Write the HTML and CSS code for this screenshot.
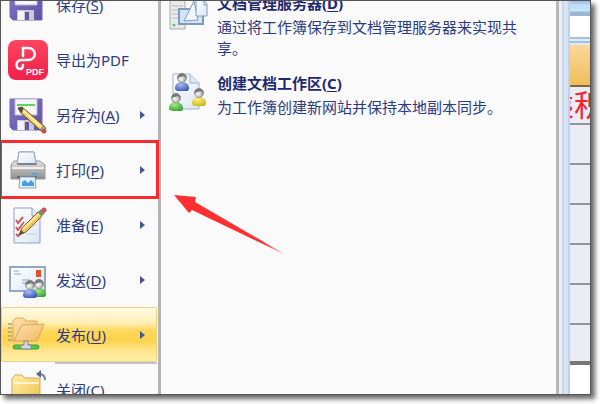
FILE: index.html
```html
<!DOCTYPE html>
<html lang="zh-CN">
<head>
<meta charset="utf-8">
<title>Office 菜单</title>
<link rel="stylesheet" href="styles.css">
</head>
<body>
<svg class="defs" aria-hidden="true">
  <defs>
    <linearGradient id="purple" x1="0" y1="0" x2="1" y2="1"><stop offset="0" stop-color="#8276c4"/><stop offset="1" stop-color="#5f50a4"/></linearGradient>
    <linearGradient id="paper" x1="0" y1="0" x2="1" y2="1"><stop offset="0" stop-color="#ffffff"/><stop offset="1" stop-color="#dbe6f2"/></linearGradient>
    <linearGradient id="folder" x1="0" y1="0" x2="1" y2="1"><stop offset="0" stop-color="#fff0ab"/><stop offset="1" stop-color="#ecbd49"/></linearGradient>
    <linearGradient id="orange" x1="0" y1="0" x2="1" y2="1"><stop offset="0" stop-color="#ffe3ac"/><stop offset="1" stop-color="#f3b562"/></linearGradient>
    <linearGradient id="metal" x1="0" y1="0" x2="0" y2="1"><stop offset="0" stop-color="#e4e4e4"/><stop offset=".5" stop-color="#b4b4b4"/><stop offset="1" stop-color="#8b8b8b"/></linearGradient>
    <linearGradient id="red" x1="0" y1="0" x2="0" y2="1"><stop offset="0" stop-color="#fb4660"/><stop offset="1" stop-color="#f1204a"/></linearGradient>
    <linearGradient id="arrow" x1="0" y1="0" x2="1" y2="0"><stop offset=".8" stop-color="#ff3030"/><stop offset="1" stop-color="#ff3030" stop-opacity=".4"/></linearGradient>
    <radialGradient id="skin" cx=".4" cy=".6" r=".6"><stop offset="0" stop-color="#fafafa"/><stop offset=".6" stop-color="#c4c4c4"/><stop offset="1" stop-color="#777"/></radialGradient>
    <radialGradient id="blue" cx=".4" cy=".3" r=".8"><stop offset="0" stop-color="#a9bdf5"/><stop offset="1" stop-color="#2f4dba"/></radialGradient>
    <radialGradient id="green" cx=".4" cy=".3" r=".8"><stop offset="0" stop-color="#a5e887"/><stop offset="1" stop-color="#2f9a2b"/></radialGradient>
    <radialGradient id="yellow" cx=".4" cy=".3" r=".8"><stop offset="0" stop-color="#fff27a"/><stop offset="1" stop-color="#c9ac19"/></radialGradient>
    <g id="floppy">
      <path d="M2 4H34V35H5L2 32Z" fill="url(#purple)" stroke="#7468b0"/>
      <path d="M7 4H29V20H7Z" fill="#f5f6f8" stroke="#b9b4dc"/>
      <path d="M9 25H26V35H9Z" fill="#c7cbd3"/><path d="M10 26H16V35H10Z" fill="#f4f4f6"/><path d="M17 27H21V35H17Z" fill="#64569f"/>
    </g>
    <g id="pencil">
      <path d="M10 13L14 12 36 31 32 35 13 18Z" fill="#f1cb60" stroke="#665133"/>
      <path d="M10 13L14 12 16 15 13 18Z" fill="#5f4a35"/>
      <path d="M15 15L33 32" stroke="#fff0a5" stroke-width="2"/>
      <path d="M32 35L36 31 38 33 34 37Z" fill="#a9b7b0" stroke="#66776e"/>
      <circle cx="36" cy="36" r="2.500" fill="#c94e4e"/>
    </g>
    <g id="head">
      <circle cx="7" cy="5" r="4.500" fill="url(#skin)" stroke="#999"/>
      <path d="M2.500 5C2-1 12-1 11.500 5L9 3 5 4Z" fill="#777"/>
    </g>
    <path id="bust" d="M0 15C0 11 4 9 7 9S14 11 14 15 11 18 7 18 0 18 0 15Z"/>
  </defs>
</svg>

<main class="window">
  <nav class="menu">
    <button class="item">
      <svg class="icon" viewBox="0 0 40 40"><use href="#floppy"/></svg>
      <span class="label">保存(<u>S</u>)</span>
    </button>
    <button class="item">
      <svg class="icon" viewBox="0 0 40 40">
        <rect width="40" height="40" rx="8" fill="url(#red)"/>
        <path d="M15 16V8H20C29 8 29 20 20 20H14C7 20 7 29 12 29 15 29 15 27 15 25" fill="none" stroke="#fff" stroke-width="2.500" stroke-linecap="round"/>
        <text class="pdf" x="18" y="35">PDF</text>
      </svg>
      <span class="label">导出为PDF</span>
    </button>
    <button class="item">
      <svg class="icon" viewBox="0 0 40 40"><use href="#floppy"/><path d="M9 10H27" stroke="#60d35d" stroke-width="2"/><use href="#pencil"/></svg>
      <span class="label">另存为(<u>A</u>)</span><span class="more"></span>
    </button>
    <button class="item marked">
      <svg class="icon" viewBox="0 0 40 40">
        <path d="M11 2H26L28 14H9Z" fill="url(#paper)" stroke="#91a5b9"/>
        <path d="M6 11H32L37 15V29H3V15Z" fill="url(#metal)" stroke="#9a9a9a"/>
        <path d="M11 2H26L28 14H9Z" fill="url(#paper)" stroke="#91a5b9"/>
        <path d="M9 13H29L28 15H10Z" fill="#7a838c"/>
        <path d="M4 18H36" stroke="#eee" stroke-width="2"/><path d="M24 24H30" stroke="#56a0e4" stroke-width="2"/>
        <path d="M9 26H29L28 29H10Z" fill="#5e6670"/>
        <path d="M12 27H27L28 38H11Z" fill="#e4f0fb" stroke="#86a6c8"/>
        <path d="M14 36V32L17 30 20 33 23 30 26 33V36Z" fill="#4d9ce3"/>
      </svg>
      <span class="label">打印(<u>P</u>)</span><span class="more"></span>
    </button>
    <button class="item">
      <svg class="icon" viewBox="0 0 40 40">
        <path d="M6 3H24L32 11V38H6Z" fill="url(#paper)" stroke="#8ba3bd"/>
        <path d="M24 3V11H32" fill="#e7eef6" stroke="#8ba3bd"/>
        <path d="M18 20H28M18 29H28" stroke="#c2cddb"/>
        <path d="M8 15L10 18 15 12M8 22L10 25 16 17M8 29L10 31 13 28" fill="none" stroke="#d9565d" stroke-width="2"/>
        <path d="M11 30L14 23 30 7 34 11 18 27Z" fill="#edc35c" stroke="#7d6336"/>
        <path d="M11 30L13 25 16 28Z" fill="#57473a"/><path d="M15 24L31 9" stroke="#ffeaa0" stroke-width="2"/>
        <path d="M30 7L33 4 37 8 34 11Z" fill="#6e9278"/><circle cx="36" cy="5" r="2.500" fill="#c55555"/>
      </svg>
      <span class="label">准备(<u>E</u>)</span><span class="more"></span>
    </button>
    <button class="item">
      <svg class="icon" viewBox="0 0 40 40">
        <path d="M2 7H37V31H2Z" fill="url(#paper)" stroke="#93a7bd" stroke-width="2"/>
        <path d="M6 11H11M6 14H13M14 20H22M14 23H20" stroke="#8ca4c2"/>
        <rect x="28" y="10" width="5" height="7" fill="#e44f2b"/>
        <g transform="translate(24 19)"><use href="#bust" fill="url(#green)"/><use href="#head"/></g>
        <g transform="translate(15 20)"><use href="#bust" fill="url(#blue)"/><use href="#head"/></g>
      </svg>
      <span class="label">发送(<u>D</u>)</span><span class="more"></span>
    </button>
    <button class="item active">
      <svg class="icon" viewBox="0 0 40 40">
        <path d="M2 8V26" stroke="#b9b083" stroke-width="4" stroke-dasharray="2 2"/>
        <path d="M5 26V6L8 3H15L18 6H29V12L24 26Z" fill="url(#orange)" stroke="#dba95f"/>
        <path d="M6 26L14 10 36 9 29 26Z" fill="url(#orange)" stroke="#dba95f"/>
        <rect x="5" y="30" width="26" height="4" rx="2" fill="#55c64b" stroke="#3f9d3d"/>
        <path d="M16 26H20V30H23V34H13V30H16Z" fill="#d4d8dc" stroke="#858c93"/>
      </svg>
      <span class="label">发布(<u>U</u>)</span><span class="more"></span>
    </button>
    <button class="item">
      <svg class="icon" viewBox="0 0 40 40">
        <path d="M4 34V9L7 5H14L17 8H32V34Z" fill="url(#folder)" stroke="#dca95b"/>
        <path d="M5 13H31" stroke="#fff5ca" stroke-width="2"/>
        <path d="M37 10C37 6 35 4 31 4" fill="none" stroke="#71849a" stroke-width="2"/><path d="M28 4L33 0V8Z" fill="#536a82"/>
      </svg>
      <span class="label">关闭(<u>C</u>)</span>
    </button>
  </nav>

  <section class="panel">
    <button class="entry">
      <svg class="icon" viewBox="0 0 40 40">
        <path d="M2 0H17V38H2Z" fill="#e8e9e9" stroke="#aaa"/><path d="M4 15H15M4 19H15M4 23H15M4 27H15" stroke="#bbb"/><circle cx="6" cy="34" r="1.500" fill="#53d34c"/>
        <path d="M11 18H35V33H11Z" fill="#d3e4f3" stroke="#7d9cbd" stroke-width="2"/><path d="M16 30L26 10 30 29Z" fill="#eef5fb" stroke="#7b9bbd"/>
        <path d="M28 9H36L39 13V25H28Z" fill="url(#paper)" stroke="#849db6"/><path d="M36 9V14H39" fill="none" stroke="#849db6"/>
      </svg>
      <span class="copy"><strong>文档管理服务器(<u>D</u>)</strong><span>通过将工作簿保存到文档管理服务器来实现共享。</span></span>
    </button>
    <button class="entry">
      <svg class="icon" viewBox="0 0 40 40">
        <path d="M5 3H22L31 12V38H5Z" fill="url(#paper)" stroke="#9cb3cc"/><path d="M22 3V12H31" fill="#dce7f2" stroke="#9cb3cc"/>
        <g transform="translate(7 2)"><use href="#bust" fill="url(#blue)"/><use href="#head"/></g>
        <g transform="translate(24 17)"><use href="#bust" fill="url(#yellow)"/><use href="#head"/></g>
        <g transform="translate(1 22)"><use href="#bust" fill="url(#green)"/><use href="#head"/></g>
      </svg>
      <span class="copy"><strong>创建文档工作区(<u>C</u>)</strong><span>为工作簿创建新网站并保持本地副本同步。</span></span>
    </button>
    <svg class="pointer" viewBox="0 0 112 60" aria-hidden="true"><path d="M0 0L22 2 21 7 112 60 18 15 15 18Z" fill="url(#arrow)"/></svg>
  </section>

  <div class="edge"></div>
  <div class="sheet">
    <div class="ribbon"></div><div class="formula"></div><div class="ruler"></div><div class="column"></div>
    <div class="cell heading"><span>乘积</span></div>
    <div class="cell"></div><div class="cell"></div><div class="cell"></div><div class="cell"></div><div class="cell"></div>
    <div class="cell last"></div>
  </div>
</main>
</body>
</html>
```
FILE: styles.css
```css
* { box-sizing: border-box; }

body {
  margin: 0;
  padding: 0 9px 9px 0;
  height: 100vh;
  background: #fff;
  font-family: "Noto Sans", "Noto Sans CJK SC", sans-serif;
  font-size: 15px;
  color: #2c3a80;
  overflow: hidden;
}

.defs { position: absolute; width: 0; height: 0; }

button {
  border: 0;
  margin: 0;
  padding: 0;
  background: none;
  font: inherit;
  color: inherit;
  text-align: left;
}

u { text-underline-offset: 2px; }

.window {
  display: flex;
  height: 100%;
  border: 1px solid #555;
  background: #fafafa;
  box-shadow: 4px 4px 5px rgba(0, 0, 0, .6);
  overflow: hidden;
}

.icon { flex: none; width: 40px; height: 40px; }

.pdf {
  font-family: "Liberation Sans", sans-serif;
  font-size: 9px;
  font-weight: bold;
  fill: #fff;
}

.menu {
  flex: none;
  width: 160px;
  margin-top: -24px;
  padding-right: 1px;
  border-right: 3px solid #b4b4b4;
}

.item {
  display: flex;
  align-items: center;
  gap: 8px;
  width: 100%;
  height: 55px;
  padding: 0 12px 0 7px;
  line-height: 20px;
}

.label { flex: 1; white-space: nowrap; }

.more {
  border: 4px solid transparent;
  border-left: 5px solid #3f5793;
  border-right: 0;
}

.item.marked {
  position: relative;
  outline: 3px solid #fb2a2f;
  outline-offset: -1px;
}

.item.active {
  border: 1px solid #ecd27c;
  border-radius: 2px;
  padding: 0 11px 0 6px;
  background: linear-gradient(#fffce6, #ffefb4 28%, #ffd85f 42%, #ffd24c 60%, #ffe58a 80%, #fff0a8);
}

.item.active + .item {
  background: linear-gradient(#c4c4c4, #c4c4c4) right top / 102px 2px no-repeat;
}

.panel {
  position: relative;
  flex: 1;
  margin-top: -10px;
  padding-left: 7px;
}

.entry {
  display: flex;
  gap: 9px;
  width: 100%;
  margin-bottom: 12px;
  padding-right: 36px;
}

.copy {
  display: flex;
  flex-direction: column;
  gap: 2px;
  line-height: 21px;
}

.copy strong { line-height: 24px; color: #1d2870; }

.pointer {
  position: absolute;
  left: 13px;
  top: 204px;
  width: 112px;
  height: 60px;
}

.edge {
  flex: none;
  width: 14px;
  background: linear-gradient(90deg, #b9b9b9 3px, #efedf0 3px 6px, #c8d7ea 6px 8px, #d5e4f4 8px 12px, #c2d1e5 12px);
}

.sheet {
  flex: none;
  width: 20px;
  background: #fff;
  overflow: hidden;
}

.ribbon { height: 15px; background: linear-gradient(#9abbe0, #bfdcf4 4px, #c2ebf5 10px, #9db5d3 11px); }
.formula { height: 21px; background: #fff; }
.ruler { height: 8px; background: repeating-linear-gradient(#a9c1d8 0 2px, #dbecfa 2px 4px); }
.column { height: 42px; border-bottom: 2px solid #836639; background: linear-gradient(#f8d89c, #efbd5a); }

.cell {
  height: 40px;
  border-bottom: 2px solid #92949e;
  background: #e9ecf5;
}

.cell.heading {
  display: flex;
  align-items: center;
  height: 38px;
  font-size: 30px;
  line-height: 38px;
  color: #f5202c;
}

.cell.heading span { margin-left: -26px; white-space: nowrap; }

.cell.last { border-bottom: 4px solid #777; }
```
